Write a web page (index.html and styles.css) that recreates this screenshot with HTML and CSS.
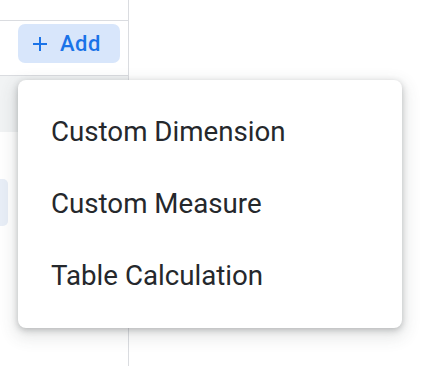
FILE: index.html
```html
<!DOCTYPE html>
<html lang="en">
<head>
  <meta charset="UTF-8">
  <title>Add field menu</title>
  <link rel="stylesheet" href="styles.css">
</head>
<body>
  <div class="page">
    <!-- Left field picker panel -->
    <aside class="panel">
      <div class="panel-top"></div>
      <div class="panel-toolbar">
        <button type="button" class="btn-add">
          <svg class="plus" width="14" height="14" viewBox="0 0 14 14">
            <path d="M7 0v14M0 7h14" stroke="currentColor" stroke-width="2" fill="none"/>
          </svg>
          <span>Add</span>
        </button>
      </div>
      <div class="panel-row gray"></div>
      <div class="panel-gap"></div>
      <div class="panel-row chip-row"><div class="chip"></div></div>
    </aside>
    <main class="content"></main>
  </div>

  <!-- Dropdown opened from the Add button -->
  <ul class="menu">
    <li>Custom Dimension</li>
    <li>Custom Measure</li>
    <li>Table Calculation</li>
  </ul>
</body>
</html>
```

FILE: styles.css
```css
html, body {
  margin: 0;
  height: 100%;
  background: #fff;
  font-family: Roboto, "Noto Sans", sans-serif;
}
.page {
  display: flex;
  height: 366px;
}
.panel {
  width: 128px;
  border-right: 1px solid #dadce0;
  display: flex;
  flex-direction: column;
}
.panel-top {
  height: 20px;
  border-bottom: 1px solid #dadce0;
}
.panel-toolbar {
  height: 55px;
  border-bottom: 1px solid #dadce0;
  padding: 3px 0 0 18px;
  box-sizing: border-box;
}
.btn-add {
  width: 102px;
  height: 39px;
  border: none;
  border-radius: 7px;
  background: #d8e6fb;
  color: #1a73e8;
  font-family: Roboto, sans-serif;
  font-size: 22px;
  font-weight: 500;
  display: flex;
  align-items: center;
  padding: 0 0 0 15px;
  gap: 13px;
  letter-spacing: 0.5px;
}
.plus {
  flex: none;
}
.panel-row.gray {
  height: 56px;
  background: #f1f3f4;
}
.panel-gap {
  height: 47px;
}
.chip-row {
  height: 47px;
}
.chip {
  width: 8px;
  height: 47px;
  background: #e8eef7;
  border-radius: 0 5px 5px 0;
}
.content {
  flex: 1;
}
.menu {
  position: absolute;
  left: 18px;
  top: 80px;
  width: 384px;
  margin: 0;
  padding: 16px 0;
  list-style: none;
  background: #fff;
  border-radius: 8px;
  box-shadow: 0 2px 6px rgba(60, 64, 67, 0.3), 0 6px 16px 4px rgba(60, 64, 67, 0.12);
}
.menu li {
  height: 72px;
  line-height: 72px;
  padding-left: 33px;
  font-size: 27.7px;
  color: #25282c;
}
```
